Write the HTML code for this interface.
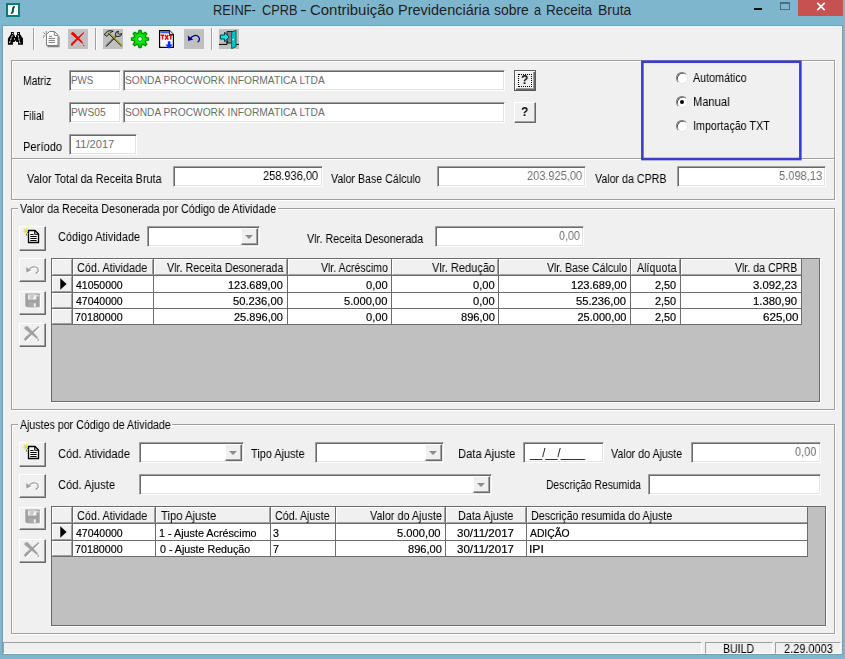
<!DOCTYPE html>
<html>
<head>
<meta charset="utf-8">
<title>REINF- CPRB</title>
<style>
*{box-sizing:border-box;margin:0;padding:0}
html,body{width:845px;height:659px;overflow:hidden;background:#7eb7cd;font-family:"Liberation Sans",sans-serif;font-size:12px;color:#000}
.abs{position:absolute}
#win{position:absolute;left:0;top:0;width:845px;height:659px;background:#7eb7cd;overflow:hidden}
.t{position:absolute;white-space:nowrap;line-height:30px;transform-origin:0 0;display:block}
.ms{font-size:12.5px;will-change:transform}.th{font-size:11px;-webkit-text-stroke:0.18px currentColor}.ns{-webkit-text-stroke:0}.title{font-size:14px}.b{font-size:13.5px;font-weight:bold;will-change:transform}
.sunk{position:absolute;background:#fff;border:1px solid;border-color:#a0a0a0 #fff #fff #a0a0a0;box-shadow:inset 1px 1px 0 #696969,inset -1px -1px 0 #e3e3e3}
.grp{position:absolute;border:1px solid #a0a0a0;box-shadow:inset 1px 1px 0 #fff,1px 1px 0 #fff}
.leg{position:absolute;background:#f0f0f0}
.btn{position:absolute;background:#f0f0f0;border:1px solid;border-color:#fff #696969 #696969 #fff;box-shadow:inset -1px -1px 0 #a0a0a0,inset 1px 1px 0 #f0f0f0}
.dflt{border-color:#5a5a5a;box-shadow:inset 1px 1px 0 #fff,inset -1px -1px 0 #696969,inset -2px -2px 0 #a0a0a0}
.dflt u{position:absolute;left:3px;top:3px;right:3px;bottom:3px;border:1px dotted #000}
.grid{position:absolute;background:#c0c0c0;border:1px solid #6c6c6c;box-shadow:1px 1px 0 #fff}
.hc{position:absolute;background:#f0f0f0;border:1px solid;border-color:#fff #a0a0a0 #a0a0a0 #fff}
.sb{position:absolute;border:1px solid;border-color:#a0a0a0 #fff #fff #a0a0a0}
.combo{position:absolute;background:#fff;border:1px solid;border-color:#a0a0a0 #fff #fff #a0a0a0;box-shadow:inset 1px 1px 0 #696969,inset -1px -1px 0 #e3e3e3}
.combo i{position:absolute;right:1px;top:1px;bottom:1px;width:17px;background:#f0f0f0;border:1px solid;border-color:#fff #696969 #696969 #fff;box-shadow:inset -1px -1px 0 #a0a0a0}
.combo i:after{content:"";position:absolute;left:3px;top:6px;border:4px solid transparent;border-top:4.5px solid #8c8c8c;border-bottom:0}
.radio{position:absolute;width:11.5px;height:11.5px;border-radius:50%;background:#fff;border:1px solid;border-color:#808080 #e8e8e8 #e8e8e8 #808080;box-shadow:inset 0.8px 0.8px 0 #505050;transform:rotate(0deg)}
</style>
</head>
<body>
<div id="win">
<div class="abs" style="left:2px;top:25px;width:841px;height:630px;background:#6aa3ba"></div>
<div class="abs" style="left:3px;top:26px;width:839px;height:628px;background:#f0f0f0"></div>
<div class="abs" style="left:6px;top:3px;width:14px;height:14px;background:#fff;border:2px solid #008078"></div>
<svg class="abs" style="left:6px;top:3px" width="14" height="14" viewBox="0 0 14 14"><path d="M8.8 4.2 C7.4 3.8 6.9 4.9 6.9 7 C6.9 9.1 6.4 10.2 5 9.8" fill="none" stroke="#064f4f" stroke-width="2"/></svg>
<div class="abs" style="left:754px;top:7.5px;width:8px;height:2.6px;background:#111"></div>
<div class="abs" style="left:780px;top:2.2px;width:10px;height:7.6px;border:1px solid #4d6f7e;border-top-width:2px"></div>
<div class="abs" style="left:798px;top:0;width:45px;height:15.6px;background:#c75050"></div>
<svg class="abs" style="left:816px;top:2px" width="10" height="9" viewBox="0 0 10 9"><path d="M1.3 0.9 L8.7 8.1 M8.7 0.9 L1.3 8.1" stroke="#fff" stroke-width="1.7"/></svg>
<div id="tb">
  <!-- binoculars -->
  <svg class="abs" style="left:4px;top:27px" width="30" height="23" viewBox="0 0 30 23">
    <path d="M6.9 5 H9.8 V7.7 H10.4 L11 9.5 V10 H12 V9.5 L12.6 7.7 H13.1 V5 H16 V7.7 H16.6 L17.5 9.5 L19 11.4 V17.8 H14 V14.9 H12.6 L11.5 13.6 L10.4 14.9 H8.9 V17.8 H3.9 V11.4 L5 10 L6 8.6 L6.4 7.7 H6.9 Z" fill="#000"/>
    <path d="M8.3 8.4 L6.9 12 L5.4 16.4" stroke="#e8e8e8" stroke-width="1" fill="none" stroke-dasharray="2.2 0.8"/>
    <path d="M14.2 8.4 L14.9 12 L16 16.4" stroke="#e8e8e8" stroke-width="1" fill="none" stroke-dasharray="2.2 0.8"/>
    <circle cx="8.5" cy="6.5" r="0.55" fill="#fff"/><circle cx="14.5" cy="6.5" r="0.55" fill="#fff"/>
    <ellipse cx="10.4" cy="12" rx="0.55" ry="0.8" fill="#fff"/>
  </svg>
  <div class="abs" style="left:33px;top:28px;width:2px;height:22px;border-left:1px solid #a0a0a0;border-right:1px solid #fff"></div>
  <!-- new doc (disabled) -->
  <svg class="abs" style="left:42px;top:30px" width="19" height="18" viewBox="42 30 19 18">
    <path d="M47.5 46.6 H59 V36.5" fill="none" stroke="#808080" stroke-width="1.2"/>
    <path d="M46.5 34.5 L49.5 31.5 L54.5 31.5 L58 35.2 L58 45.5 L46.5 45.5 Z" fill="#fff" stroke="#808080" stroke-width="1"/>
    <path d="M54.3 31.7 L54.3 35.4 L58 35.4" fill="none" stroke="#808080" stroke-width="1"/>
    <path d="M49 36.4 H52 M48.5 38.4 H55 M48.5 40.4 H55 M48.5 42.4 H55" stroke="#808080" stroke-width="1"/>
    <path d="M46.3 31 V34.4 M43.4 32.4 L45.4 34.4 M43 36 H45.4" stroke="#808080" stroke-width="0.9"/>
    <rect x="43" y="37.2" width="0.9" height="0.9" fill="#808080"/>
  </svg>
  <!-- red X -->
  <div class="abs" style="left:68px;top:29px;width:20px;height:20px;background:#c0c0c0"></div>
  <svg class="abs" style="left:68px;top:29px" width="20" height="20" viewBox="0 0 20 20">
    <path d="M2.9 4.4 L4.3 3 L6 3.4 L14.2 12.6 L15.4 15.2 L13 13.6 L3.6 5.6 Z" fill="#f00000"/>
    <path d="M15.9 3.1 L16.1 3.9 L5.2 15.6 L4 17 L2.8 15.8 L3.4 14.2 L9.5 8.6 Z" fill="#f00000"/>
    <circle cx="15.8" cy="16.3" r="0.65" fill="#e00000"/>
  </svg>
  <div class="abs" style="left:95px;top:28px;width:2px;height:22px;border-left:1px solid #a0a0a0;border-right:1px solid #fff"></div>
  <!-- tools -->
  <div class="abs" style="left:103px;top:29px;width:20px;height:20px;background:#c0c0c0"></div>
  <svg class="abs" style="left:103px;top:29px" width="20" height="20" viewBox="0 0 20 20">
    <path d="M2.8 17 L13 6.5" stroke="#8c8c8c" stroke-width="1.7"/>
    <path d="M3.3 17.5 L13.5 7" stroke="#000" stroke-width="0.9"/>
    <path d="M12.3 6 L13 3.2 L15.6 2.2 L14.8 4.2 L16.4 5.3 L18.8 4.6 L17.6 7 L15 7.6 L13.4 7.2 Z" fill="#b4b4b4" stroke="#000" stroke-width="0.8" stroke-linejoin="round"/>
    <path d="M1.2 5.4 L4.6 2.2 L7.2 1.6 L10.2 2.2 L8 3.2 L5.6 5.6 L3.8 7.4 Z" fill="#a8a8a8" stroke="#000" stroke-width="0.8" stroke-linejoin="round"/>
    <path d="M5.4 4.4 L18.6 17.1" stroke="#000" stroke-width="1"/>
    <path d="M6 3.8 L19.2 16.5" stroke="#a8a020" stroke-width="1.3"/>
  </svg>
  <!-- gear -->
  <svg class="abs" style="left:130px;top:28.5px" width="20" height="20" viewBox="-10 -10 20 20">
    <path d="M-1.47 -6.13 L-1.14 -8.52 L1.14 -8.52 L1.47 -6.13 L3.29 -5.37 L5.22 -6.84 L6.84 -5.22 L5.37 -3.29 L6.13 -1.47 L8.52 -1.14 L8.52 1.14 L6.13 1.47 L5.37 3.29 L6.84 5.22 L5.22 6.84 L3.29 5.37 L1.47 6.13 L1.14 8.52 L-1.14 8.52 L-1.47 6.13 L-3.29 5.37 L-5.22 6.84 L-6.84 5.22 L-5.37 3.29 L-6.13 1.47 L-8.52 1.14 L-8.52 -1.14 L-6.13 -1.47 L-5.37 -3.29 L-6.84 -5.22 L-5.22 -6.84 L-3.29 -5.37 Z" fill="#00e000" stroke="#009000" stroke-width="1.3" stroke-linejoin="round"/>
    <circle r="4" fill="#10f010"/>
    <circle r="2.3" fill="#f4fff4" stroke="#008800" stroke-width="0.9"/>
  </svg>
  <!-- TXT doc -->
  <svg class="abs" style="left:158px;top:29px" width="18" height="21" viewBox="0 0 18 21">
    <path d="M1.6 1.6 L11.5 1.6 L15.4 5.5 L15.4 18.4 L1.6 18.4 Z" fill="#fff" stroke="#000" stroke-width="1.2"/>
    <path d="M11.5 1.6 L11.5 5.5 L15.4 5.5" fill="#e8e8e8" stroke="#000" stroke-width="0.9"/>
    <rect x="2.4" y="2.2" width="8.8" height="2.1" fill="#3060e4"/>
    <g stroke="#f00000" stroke-width="1.45" fill="none">
      <path d="M2.7 6.3 H6.3 M4.5 6.3 V10.6"/>
      <path d="M7.1 6 L10.3 10.6 M10.3 6 L7.1 10.6"/>
      <path d="M11 6.3 H14.6 M12.8 6.3 V10.6"/>
    </g>
    <path d="M9.8 12.3 L12.4 12.3 L12.4 15.6 L14.8 15.6 L11.1 19.8 L7.4 15.6 L9.8 15.6 Z" fill="#0030ff"/>
  </svg>
  <!-- undo -->
  <div class="abs" style="left:184px;top:29px;width:20px;height:20px;background:#c0c0c0"></div>
  <svg class="abs" style="left:184px;top:29px" width="20" height="20" viewBox="0 0 20 20">
    <path d="M6.5 9.5 C8 6.3 12.6 5.3 14.6 7.8 C16.2 10 15.4 12 13.6 13.2" fill="none" stroke="#000098" stroke-width="1.3"/>
    <path d="M3.8 6.6 L4.2 12 L9.2 10.6 Z" fill="#000098"/>
  </svg>
  <div class="abs" style="left:211px;top:28px;width:2px;height:22px;border-left:1px solid #a0a0a0;border-right:1px solid #fff"></div>
  <!-- exit -->
  <div class="abs" style="left:219px;top:29px;width:20px;height:20px;background:#c0c0c0"></div>
  <svg class="abs" style="left:219px;top:29px" width="20" height="20" viewBox="0 0 20 20">
    <path d="M8 2.5 H15.5 V14 H8 Z" fill="#808080" stroke="#202020" stroke-width="1"/>
    <path d="M0 15.4 H8 V12 M16 15.4 H20" stroke="#000" stroke-width="1" fill="none"/>
    <path d="M12.6 3.2 L17 1.2 L17 17.8 L12.6 19.6 Z" fill="#00c4c4" stroke="#005858" stroke-width="0.9"/>
    <circle cx="14.2" cy="10.8" r="0.8" fill="#fff"/>
    <path d="M1.4 6 H5.6 V3.2 L10.2 8 L5.6 12.8 V10 H1.4 Z" fill="#00e8e8" stroke="#002828" stroke-width="0.9" stroke-linejoin="round"/>
  </svg>
</div>
<div class="grp" style="left:11px;top:60px;width:824px;height:99px;"></div>
<div class="grp" style="left:11px;top:158px;width:824px;height:42px;"></div>
<div class="sunk" style="left:69px;top:70px;width:52px;height:21px;"></div>
<div class="sunk" style="left:123px;top:70px;width:382px;height:21px;"></div>
<div class="sunk" style="left:69px;top:102px;width:52px;height:21px;"></div>
<div class="sunk" style="left:123px;top:102px;width:382px;height:21px;"></div>
<div class="sunk" style="left:69px;top:134px;width:68px;height:21px;"></div>
<div class="sunk" style="left:173px;top:166px;width:150px;height:21px;"></div>
<div class="sunk" style="left:437px;top:166px;width:149px;height:21px;"></div>
<div class="sunk" style="left:677px;top:166px;width:149px;height:21px;"></div>
<div class="sunk" style="left:435px;top:226px;width:149px;height:21px;"></div>
<div class="sunk" style="left:523px;top:442px;width:81px;height:21px;"></div>
<div class="sunk" style="left:691px;top:442px;width:130px;height:21px;"></div>
<div class="sunk" style="left:648px;top:474px;width:173px;height:21px;"></div>
<div class="combo" style="left:147px;top:226px;width:113px;height:21px;"><i></i></div>
<div class="combo" style="left:139px;top:442px;width:105px;height:21px;"><i></i></div>
<div class="combo" style="left:315px;top:442px;width:129px;height:21px;"><i></i></div>
<div class="combo" style="left:139px;top:474px;width:353px;height:21px;"><i></i></div>
<div class="btn dflt" style="left:514px;top:70px;width:22px;height:21px;"><u></u></div>
<div class="btn" style="left:514px;top:102px;width:22px;height:21px;"></div>
<svg class="abs" style="left:640px;top:59px" width="164" height="103"><rect x="2.35" y="2.75" width="158" height="97.3" fill="none" stroke="#3c3ccb" stroke-width="2.6"/></svg>
<div class="radio" style="left:676px;top:72px"></div>
<div class="radio" style="left:676px;top:96.3px"></div>
<div class="radio" style="left:676px;top:120.3px"></div>
<div class="abs" style="left:679.5px;top:99.8px;width:4px;height:4px;border-radius:50%;background:#000"></div>
<div class="grp" style="left:11px;top:208px;width:824px;height:202px;"></div>
<div class="leg" style="left:18px;top:203px;width:260px;height:12px;"></div>
<div class="grp" style="left:11px;top:424px;width:824px;height:210px;"></div>
<div class="leg" style="left:18px;top:419px;width:154px;height:12px;"></div>
<div class="btn" style="left:19px;top:226px;width:27px;height:25px;"><svg width="26" height="22" viewBox="0 0 26 22" style="position:absolute;left:-2px;top:-2px"><path d="M10.5 5.5 H17 L20.5 9 V17.5 H10.5 Z" fill="#fff" stroke="#000" stroke-width="1.35"/><path d="M16.8 5.5 V9.2 H20.5" fill="none" stroke="#000" stroke-width="1.1"/><path d="M12.3 9.5 H15.5 M12.3 11.5 H18.7 M12.3 13.5 H18.7 M12.3 15.5 H18.7" stroke="#000" stroke-width="1"/><path d="M6 4 L10.5 8.5 M6.2 8.7 L10.5 4.2 M8.3 3.2 V6 M5.5 6.4 H8" stroke="#dcdc00" stroke-width="0.9"/><path d="M9 7 L11 9 M8.5 8.5 V10.5" stroke="#404000" stroke-width="0.7"/></svg></div>
<div class="btn" style="left:19px;top:258px;width:27px;height:24px;"><svg width="26" height="22" viewBox="0 0 26 22" style="position:absolute;left:-1px;top:-1px"><g transform="translate(1,1)"><path d="M10 11.5 C12 8.5 17 8 18.7 10.5 C20 13 18.5 14.8 16.5 15.3" fill="none" stroke="#fff" stroke-width="1.3"/><path d="M7 9.2 L7.6 14.6 L12.4 12.2 Z" fill="#fff"/></g><g transform="translate(0,0)"><path d="M10 11.5 C12 8.5 17 8 18.7 10.5 C20 13 18.5 14.8 16.5 15.3" fill="none" stroke="#a0a0a0" stroke-width="1.3"/><path d="M7 9.2 L7.6 14.6 L12.4 12.2 Z" fill="#a0a0a0"/></g></svg></div>
<div class="btn" style="left:19px;top:290.5px;width:27px;height:24.0px;"><svg width="26" height="22" viewBox="0 0 26 22" style="position:absolute;left:-1px;top:-2.5px"><path transform="translate(1,1)" d="M6.3 4.5 H20.7 V18.3 H7.8 L6.3 16.8 Z" fill="#fff"/><path transform="translate(0,0)" d="M6.3 4.5 H20.7 V18.3 H7.8 L6.3 16.8 Z" fill="#a0a0a0"/><rect x="9" y="5.5" width="8.5" height="5" fill="#efefef"/><path d="M10.5 7 H15 M10.5 9 H14" stroke="#a0a0a0" stroke-width="0.9"/><rect x="18" y="6" width="1.5" height="1.5" fill="#efefef"/><rect x="9.5" y="13.3" width="8" height="5" fill="#a9a9a9"/><rect x="14.8" y="14.3" width="2" height="3.4" fill="#efefef"/></svg></div>
<div class="btn" style="left:19px;top:322.5px;width:27px;height:24.5px;"><svg width="26" height="22" viewBox="0 0 26 22" style="position:absolute;left:-1px;top:-2.5px"><g transform="translate(3.3,3.4) scale(1.08,1.02)" fill="#fff" stroke="#fff" stroke-width="0.7"><path d="M2.9 4.4 L4.3 3 L6 3.4 L14.2 12.6 L15.4 15.2 L13 13.6 L3.6 5.6 Z"/><path d="M15.9 3.1 L16.1 3.9 L5.2 15.6 L4 17 L2.8 15.8 L3.4 14.2 L9.5 8.6 Z"/><circle cx="15.8" cy="16.3" r="0.6"/></g><g transform="translate(2.3,2.4) scale(1.08,1.02)" fill="#a0a0a0" stroke="#a0a0a0" stroke-width="0.7"><path d="M2.9 4.4 L4.3 3 L6 3.4 L14.2 12.6 L15.4 15.2 L13 13.6 L3.6 5.6 Z"/><path d="M15.9 3.1 L16.1 3.9 L5.2 15.6 L4 17 L2.8 15.8 L3.4 14.2 L9.5 8.6 Z"/><circle cx="15.8" cy="16.3" r="0.6"/></g></svg></div>
<div class="btn" style="left:19px;top:442px;width:27px;height:24.5px;"><svg width="26" height="22" viewBox="0 0 26 22" style="position:absolute;left:-2px;top:-2px"><path d="M10.5 5.5 H17 L20.5 9 V17.5 H10.5 Z" fill="#fff" stroke="#000" stroke-width="1.35"/><path d="M16.8 5.5 V9.2 H20.5" fill="none" stroke="#000" stroke-width="1.1"/><path d="M12.3 9.5 H15.5 M12.3 11.5 H18.7 M12.3 13.5 H18.7 M12.3 15.5 H18.7" stroke="#000" stroke-width="1"/><path d="M6 4 L10.5 8.5 M6.2 8.7 L10.5 4.2 M8.3 3.2 V6 M5.5 6.4 H8" stroke="#dcdc00" stroke-width="0.9"/><path d="M9 7 L11 9 M8.5 8.5 V10.5" stroke="#404000" stroke-width="0.7"/></svg></div>
<div class="btn" style="left:19px;top:474px;width:27px;height:24px;"><svg width="26" height="22" viewBox="0 0 26 22" style="position:absolute;left:-1px;top:-1px"><g transform="translate(1,1)"><path d="M10 11.5 C12 8.5 17 8 18.7 10.5 C20 13 18.5 14.8 16.5 15.3" fill="none" stroke="#fff" stroke-width="1.3"/><path d="M7 9.2 L7.6 14.6 L12.4 12.2 Z" fill="#fff"/></g><g transform="translate(0,0)"><path d="M10 11.5 C12 8.5 17 8 18.7 10.5 C20 13 18.5 14.8 16.5 15.3" fill="none" stroke="#a0a0a0" stroke-width="1.3"/><path d="M7 9.2 L7.6 14.6 L12.4 12.2 Z" fill="#a0a0a0"/></g></svg></div>
<div class="btn" style="left:19px;top:506.5px;width:27px;height:23.5px;"><svg width="26" height="22" viewBox="0 0 26 22" style="position:absolute;left:-1px;top:-2.5px"><path transform="translate(1,1)" d="M6.3 4.5 H20.7 V18.3 H7.8 L6.3 16.8 Z" fill="#fff"/><path transform="translate(0,0)" d="M6.3 4.5 H20.7 V18.3 H7.8 L6.3 16.8 Z" fill="#a0a0a0"/><rect x="9" y="5.5" width="8.5" height="5" fill="#efefef"/><path d="M10.5 7 H15 M10.5 9 H14" stroke="#a0a0a0" stroke-width="0.9"/><rect x="18" y="6" width="1.5" height="1.5" fill="#efefef"/><rect x="9.5" y="13.3" width="8" height="5" fill="#a9a9a9"/><rect x="14.8" y="14.3" width="2" height="3.4" fill="#efefef"/></svg></div>
<div class="btn" style="left:19px;top:538.5px;width:27px;height:24.0px;"><svg width="26" height="22" viewBox="0 0 26 22" style="position:absolute;left:-1px;top:-2.5px"><g transform="translate(3.3,3.4) scale(1.08,1.02)" fill="#fff" stroke="#fff" stroke-width="0.7"><path d="M2.9 4.4 L4.3 3 L6 3.4 L14.2 12.6 L15.4 15.2 L13 13.6 L3.6 5.6 Z"/><path d="M15.9 3.1 L16.1 3.9 L5.2 15.6 L4 17 L2.8 15.8 L3.4 14.2 L9.5 8.6 Z"/><circle cx="15.8" cy="16.3" r="0.6"/></g><g transform="translate(2.3,2.4) scale(1.08,1.02)" fill="#a0a0a0" stroke="#a0a0a0" stroke-width="0.7"><path d="M2.9 4.4 L4.3 3 L6 3.4 L14.2 12.6 L15.4 15.2 L13 13.6 L3.6 5.6 Z"/><path d="M15.9 3.1 L16.1 3.9 L5.2 15.6 L4 17 L2.8 15.8 L3.4 14.2 L9.5 8.6 Z"/><circle cx="15.8" cy="16.3" r="0.6"/></g></svg></div>
<div class="grid" style="left:51px;top:258px;width:769px;height:144px;"></div>
<div class="abs" style="left:72.9px;top:276.25px;width:728.6px;height:48.0px;background:#fff"></div>
<div class="abs" style="left:52px;top:259px;width:749.5px;height:16.75px;background:#f0f0f0"></div>
<div class="abs" style="left:52px;top:259px;width:20.400000000000006px;height:65.25px;background:#f0f0f0"></div>
<div class="hc" style="left:52px;top:259px;width:20.400000000000006px;height:16.25px;"></div>
<div class="hc" style="left:72.9px;top:259px;width:80.1px;height:16.25px;"></div>
<div class="hc" style="left:153.5px;top:259px;width:133.75px;height:16.25px;"></div>
<div class="hc" style="left:287.75px;top:259px;width:103.75px;height:16.25px;"></div>
<div class="hc" style="left:392.0px;top:259px;width:106.25px;height:16.25px;"></div>
<div class="hc" style="left:498.75px;top:259px;width:132.0px;height:16.25px;"></div>
<div class="hc" style="left:631.25px;top:259px;width:49.0px;height:16.25px;"></div>
<div class="hc" style="left:680.75px;top:259px;width:120.75px;height:16.25px;"></div>
<div class="hc" style="left:52px;top:276.25px;width:19.900000000000006px;height:15.25px;"></div>
<div class="hc" style="left:52px;top:292.5px;width:19.900000000000006px;height:15.25px;"></div>
<div class="hc" style="left:52px;top:308.75px;width:19.900000000000006px;height:15.0px;"></div>
<div class="abs" style="left:71.9px;top:259px;width:1px;height:65.75px;background:#6c6c6c"></div>
<div class="abs" style="left:152.5px;top:259px;width:1px;height:65.75px;background:#6c6c6c"></div>
<div class="abs" style="left:286.75px;top:259px;width:1px;height:65.75px;background:#6c6c6c"></div>
<div class="abs" style="left:391.0px;top:259px;width:1px;height:65.75px;background:#6c6c6c"></div>
<div class="abs" style="left:497.75px;top:259px;width:1px;height:65.75px;background:#6c6c6c"></div>
<div class="abs" style="left:630.25px;top:259px;width:1px;height:65.75px;background:#6c6c6c"></div>
<div class="abs" style="left:679.75px;top:259px;width:1px;height:65.75px;background:#6c6c6c"></div>
<div class="abs" style="left:801.0px;top:259px;width:1px;height:65.75px;background:#6c6c6c"></div>
<div class="abs" style="left:52px;top:275.25px;width:750.0px;height:1px;background:#6c6c6c"></div>
<div class="abs" style="left:52px;top:291.5px;width:750.0px;height:1px;background:#6c6c6c"></div>
<div class="abs" style="left:52px;top:307.75px;width:750.0px;height:1px;background:#6c6c6c"></div>
<div class="abs" style="left:52px;top:323.75px;width:750.0px;height:1px;background:#6c6c6c"></div>
<svg class="abs" style="left:59.5px;top:278.175px" width="8" height="12"><path d="M0.3 0.3 L6.6 6 L0.3 11.7 Z" fill="#000"/></svg>
<div class="grid" style="left:51px;top:506px;width:775px;height:120px;"></div>
<div class="abs" style="left:72.9px;top:524.0px;width:734.85px;height:32.0px;background:#fff"></div>
<div class="abs" style="left:52px;top:507px;width:755.75px;height:16.5px;background:#f0f0f0"></div>
<div class="abs" style="left:52px;top:507px;width:20.400000000000006px;height:49px;background:#f0f0f0"></div>
<div class="hc" style="left:52px;top:507px;width:20.400000000000006px;height:16.0px;"></div>
<div class="hc" style="left:72.9px;top:507px;width:82.1px;height:16.0px;"></div>
<div class="hc" style="left:155.5px;top:507px;width:114.75px;height:16.0px;"></div>
<div class="hc" style="left:270.75px;top:507px;width:64.75px;height:16.0px;"></div>
<div class="hc" style="left:336.0px;top:507px;width:109.0px;height:16.0px;"></div>
<div class="hc" style="left:445.5px;top:507px;width:80.75px;height:16.0px;"></div>
<div class="hc" style="left:526.75px;top:507px;width:281.0px;height:16.0px;"></div>
<div class="hc" style="left:52px;top:524.0px;width:19.900000000000006px;height:15.75px;"></div>
<div class="hc" style="left:52px;top:540.75px;width:19.900000000000006px;height:14.75px;"></div>
<div class="abs" style="left:71.9px;top:507px;width:1px;height:49.5px;background:#6c6c6c"></div>
<div class="abs" style="left:154.5px;top:507px;width:1px;height:49.5px;background:#6c6c6c"></div>
<div class="abs" style="left:269.75px;top:507px;width:1px;height:49.5px;background:#6c6c6c"></div>
<div class="abs" style="left:335.0px;top:507px;width:1px;height:49.5px;background:#6c6c6c"></div>
<div class="abs" style="left:444.5px;top:507px;width:1px;height:49.5px;background:#6c6c6c"></div>
<div class="abs" style="left:525.75px;top:507px;width:1px;height:49.5px;background:#6c6c6c"></div>
<div class="abs" style="left:807.25px;top:507px;width:1px;height:49.5px;background:#6c6c6c"></div>
<div class="abs" style="left:52px;top:523.0px;width:756.25px;height:1px;background:#6c6c6c"></div>
<div class="abs" style="left:52px;top:539.75px;width:756.25px;height:1px;background:#6c6c6c"></div>
<div class="abs" style="left:52px;top:555.5px;width:756.25px;height:1px;background:#6c6c6c"></div>
<svg class="abs" style="left:59.5px;top:526.175px" width="8" height="12"><path d="M0.3 0.3 L6.6 6 L0.3 11.7 Z" fill="#000"/></svg>
<div class="sb" style="left:3px;top:642px;width:699px;height:12px;"></div>
<div class="sb" style="left:705px;top:642px;width:67.5px;height:12px;"></div>
<div class="sb" style="left:775px;top:642px;width:65.5px;height:12px;"></div>

<span class="t title" style="left:212.83px;top:-5.20px;color:#1e1e1e;transform:scaleX(0.9167)">REINF-</span>
<span class="t title" style="left:261.59px;top:-5.20px;color:#1e1e1e;transform:scaleX(0.9122)">CPRB</span>
<span class="t title" style="left:300.47px;top:-5.20px;color:#1e1e1e;transform:scaleX(1.4333)">-</span>
<span class="t title" style="left:310.03px;top:-5.20px;color:#1e1e1e;transform:scaleX(1.0662)">Contribuição</span>
<span class="t title" style="left:397.66px;top:-5.20px;color:#1e1e1e;transform:scaleX(1.0352)">Previdenciária</span>
<span class="t title" style="left:493.91px;top:-5.20px;color:#1e1e1e;transform:scaleX(0.9941)">sobre</span>
<span class="t title" style="left:533.89px;top:-5.20px;color:#1e1e1e;transform:scaleX(0.9143)">a</span>
<span class="t title" style="left:545.73px;top:-5.20px;color:#1e1e1e;transform:scaleX(0.9723)">Receita</span>
<span class="t title" style="left:597.80px;top:-5.20px;color:#1e1e1e;transform:scaleX(0.9970)">Bruta</span>
<span class="t ms" style="left:22.92px;top:66.00px;color:#000;transform:scaleX(0.8333)">Matriz</span>
<span class="t ms" style="left:22.94px;top:101.00px;color:#000;transform:scaleX(0.8125)">Filial</span>
<span class="t ms" style="left:22.86px;top:131.50px;color:#000;transform:scaleX(0.8929)">Período</span>
<span class="t th ns" style="left:71.11px;top:64.75px;color:#6d6d6d;transform:scaleX(0.8854)">PWS</span>
<span class="t th ns" style="left:124.82px;top:64.75px;color:#6d6d6d;transform:scaleX(0.9276)">SONDA PROCWORK INFORMATICA LTDA</span>
<span class="t th ns" style="left:71.07px;top:96.50px;color:#6d6d6d;transform:scaleX(0.9306)">PWS05</span>
<span class="t th ns" style="left:124.82px;top:96.50px;color:#6d6d6d;transform:scaleX(0.9276)">SONDA PROCWORK INFORMATICA LTDA</span>
<span class="t th ns" style="left:75.24px;top:129.00px;color:#6d6d6d;transform:scaleX(1.0066)">11/2017</span>
<span class="t b" style="left:521.11px;top:64.90px;color:#000;transform:scaleX(0.8929)">?</span>
<span class="t b" style="left:521.11px;top:97.00px;color:#000;transform:scaleX(0.8929)">?</span>
<span class="t ms" style="left:693.25px;top:63.25px;color:#000;transform:scaleX(0.8589)">Automático</span>
<span class="t ms" style="left:693.11px;top:87.00px;color:#000;transform:scaleX(0.8910)">Manual</span>
<span class="t ms" style="left:692.64px;top:110.75px;color:#000;transform:scaleX(0.8580)">Importação TXT</span>
<span class="t ms" style="left:27.00px;top:163.50px;color:#000;transform:scaleX(0.8718)">Valor Total da Receita Bruta</span>
<span class="t ms" style="left:262.62px;top:161.25px;color:#000;transform:scaleX(0.8811)">258.936,00</span>
<span class="t ms" style="left:331.00px;top:163.50px;color:#000;transform:scaleX(0.8500)">Valor Base Cálculo</span>
<span class="t ms" style="left:526.87px;top:161.25px;color:#6d6d6d;transform:scaleX(0.8811)">203.925,00</span>
<span class="t ms" style="left:595.00px;top:163.50px;color:#000;transform:scaleX(0.8524)">Valor da CPRB</span>
<span class="t ms" style="left:778.86px;top:161.25px;color:#6d6d6d;transform:scaleX(0.8883)">5.098,13</span>
<span class="t ms" style="left:20.00px;top:194.00px;color:#000;transform:scaleX(0.8562)">Valor da Receita Desonerada por Código de Atividade</span>
<span class="t ms" style="left:57.88px;top:222.25px;color:#000;transform:scaleX(0.8750)">Código Atividade</span>
<span class="t ms" style="left:307.25px;top:223.50px;color:#000;transform:scaleX(0.8574)">Vlr. Receita Desonerada</span>
<span class="t ms" style="left:559.00px;top:221.00px;color:#6d6d6d;transform:scaleX(0.8542)">0,00</span>
<span class="t ms" style="left:76.63px;top:253.00px;color:#000;transform:scaleX(0.8703)">Cód. Atividade</span>
<span class="t ms" style="left:167.00px;top:253.00px;color:#000;transform:scaleX(0.8593)">Vlr. Receita Desonerada</span>
<span class="t ms" style="left:320.50px;top:253.00px;color:#000;transform:scaleX(0.8449)">Vlr. Acréscimo</span>
<span class="t ms" style="left:431.50px;top:253.00px;color:#000;transform:scaleX(0.8803)">Vlr. Redução</span>
<span class="t ms" style="left:546.50px;top:253.00px;color:#000;transform:scaleX(0.8421)">Vlr. Base Cálculo</span>
<span class="t ms" style="left:636.50px;top:253.00px;color:#000;transform:scaleX(0.8587)">Alíquota</span>
<span class="t ms" style="left:735.25px;top:253.00px;color:#000;transform:scaleX(0.8459)">Vlr. da CPRB</span>
<span class="t th" style="left:76.25px;top:269.75px;color:#000;transform:scaleX(0.9541)">41050000</span>
<span class="t th" style="left:228.25px;top:269.75px;color:#000;transform:scaleX(0.9954)">123.689,00</span>
<span class="t th" style="left:366.00px;top:269.75px;color:#000;transform:scaleX(1.0119)">0,00</span>
<span class="t th" style="left:472.75px;top:269.75px;color:#000;transform:scaleX(1.0119)">0,00</span>
<span class="t th" style="left:570.99px;top:269.75px;color:#000;transform:scaleX(1.0093)">123.689,00</span>
<span class="t th" style="left:655.25px;top:269.75px;color:#000;transform:scaleX(0.9881)">2,50</span>
<span class="t th" style="left:753.47px;top:269.75px;color:#000;transform:scaleX(1.0298)">3.092,23</span>
<span class="t th" style="left:76.25px;top:286.00px;color:#000;transform:scaleX(0.9541)">47040000</span>
<span class="t th" style="left:232.98px;top:286.00px;color:#000;transform:scaleX(1.0208)">50.236,00</span>
<span class="t th" style="left:343.74px;top:286.00px;color:#000;transform:scaleX(1.0119)">5.000,00</span>
<span class="t th" style="left:472.75px;top:286.00px;color:#000;transform:scaleX(1.0119)">0,00</span>
<span class="t th" style="left:576.48px;top:286.00px;color:#000;transform:scaleX(1.0208)">55.236,00</span>
<span class="t th" style="left:655.25px;top:286.00px;color:#000;transform:scaleX(0.9881)">2,50</span>
<span class="t th" style="left:753.47px;top:286.00px;color:#000;transform:scaleX(1.0298)">1.380,90</span>
<span class="t th" style="left:75.28px;top:302.25px;color:#000;transform:scaleX(0.9740)">70180000</span>
<span class="t th" style="left:234.00px;top:302.25px;color:#000;transform:scaleX(1.0000)">25.896,00</span>
<span class="t th" style="left:366.00px;top:302.25px;color:#000;transform:scaleX(1.0119)">0,00</span>
<span class="t th" style="left:460.75px;top:302.25px;color:#000;transform:scaleX(1.0076)">896,00</span>
<span class="t th" style="left:577.50px;top:302.25px;color:#000;transform:scaleX(1.0000)">25.000,00</span>
<span class="t th" style="left:655.25px;top:302.25px;color:#000;transform:scaleX(0.9881)">2,50</span>
<span class="t th" style="left:762.95px;top:302.25px;color:#000;transform:scaleX(1.0547)">625,00</span>
<span class="t ms" style="left:20.00px;top:410.25px;color:#000;transform:scaleX(0.8503)">Ajustes por Código de Atividade</span>
<span class="t ms" style="left:57.86px;top:438.50px;color:#000;transform:scaleX(0.8924)">Cód. Atividade</span>
<span class="t ms" style="left:251.00px;top:438.50px;color:#000;transform:scaleX(0.8730)">Tipo Ajuste</span>
<span class="t ms" style="left:457.85px;top:438.50px;color:#000;transform:scaleX(0.8968)">Data Ajuste</span>
<span class="t ms" style="left:529.50px;top:437.50px;color:#000;transform:scaleX(0.8810)">__/__/____</span>
<span class="t ms" style="left:611.25px;top:438.50px;color:#000;transform:scaleX(0.8554)">Valor do Ajuste</span>
<span class="t ms" style="left:794.75px;top:436.75px;color:#6d6d6d;transform:scaleX(0.8750)">0,00</span>
<span class="t ms" style="left:57.86px;top:470.25px;color:#000;transform:scaleX(0.8929)">Cód. Ajuste</span>
<span class="t ms" style="left:546.18px;top:470.00px;color:#000;transform:scaleX(0.8224)">Descrição Resumida</span>
<span class="t ms" style="left:76.63px;top:501.00px;color:#000;transform:scaleX(0.8703)">Cód. Atividade</span>
<span class="t ms" style="left:161.25px;top:501.00px;color:#000;transform:scaleX(0.9000)">Tipo Ajuste</span>
<span class="t ms" style="left:274.65px;top:501.00px;color:#000;transform:scaleX(0.8532)">Cód. Ajuste</span>
<span class="t ms" style="left:370.25px;top:501.00px;color:#000;transform:scaleX(0.8645)">Valor do Ajuste</span>
<span class="t ms" style="left:457.88px;top:501.00px;color:#000;transform:scaleX(0.8651)">Data Ajuste</span>
<span class="t ms" style="left:530.65px;top:501.00px;color:#000;transform:scaleX(0.8537)">Descrição resumida do Ajuste</span>
<span class="t th" style="left:76.25px;top:517.75px;color:#000;transform:scaleX(0.9541)">47040000</span>
<span class="t th" style="left:159.02px;top:517.75px;color:#000;transform:scaleX(0.9796)">1 - Ajuste Acréscimo</span>
<span class="t th" style="left:273.03px;top:517.75px;color:#000;transform:scaleX(0.9700)">3</span>
<span class="t th" style="left:397.48px;top:517.75px;color:#000;transform:scaleX(1.0179)">5.000,00</span>
<span class="t th" style="left:457.20px;top:517.75px;color:#000;transform:scaleX(1.0519)">30/11/2017</span>
<span class="t th" style="left:530.00px;top:517.75px;color:#000;transform:scaleX(0.9405)">ADIÇÃO</span>
<span class="t th" style="left:75.28px;top:533.75px;color:#000;transform:scaleX(0.9740)">70180000</span>
<span class="t th" style="left:160.00px;top:533.75px;color:#000;transform:scaleX(0.9704)">0 - Ajuste Redução</span>
<span class="t th" style="left:273.03px;top:533.75px;color:#000;transform:scaleX(0.9700)">7</span>
<span class="t th" style="left:408.00px;top:533.75px;color:#000;transform:scaleX(1.0076)">896,00</span>
<span class="t th" style="left:457.20px;top:533.75px;color:#000;transform:scaleX(1.0519)">30/11/2017</span>
<span class="t th" style="left:528.90px;top:533.75px;color:#000;transform:scaleX(1.1042)">IPI</span>
<div class="abs" style="left:0;top:0;width:845px;height:653.6px;overflow:hidden"><span class="t ms" style="left:723.15px;top:633.70px;color:#000;transform:scaleX(0.8457)">BUILD</span><span class="t ms" style="left:783.72px;top:633.70px;color:#000;transform:scaleX(0.8778)">2.29.0003</span></div>
</div>
</body>
</html>
